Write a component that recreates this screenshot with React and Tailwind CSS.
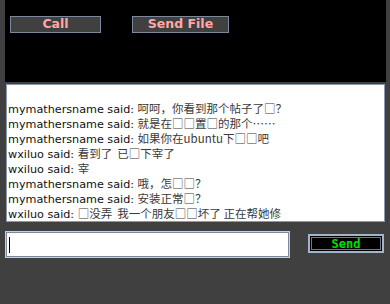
const lines = [
  ["mymathersname said: ", "呵呵，你看到那个帖子了□？"],
  ["mymathersname said: ", "就是在□□置□的那个……"],
  ["mymathersname said: ", "如果你在ubuntu下□□吧"],
  ["wxiluo said: ", "看到了  已□下宰了"],
  ["wxiluo said: ", "宰"],
  ["mymathersname said: ", "哦，怎□□？"],
  ["mymathersname said: ", "安装正常□？"],
  ["wxiluo said: ", "□没弄  我一个朋友□□坏了 正在帮她修"],
];

function TopButton({ label, width }) {
  return (
    <button
      className={`${width} h-[17px] bg-[#404040] border border-[#7a8a9c] text-[#ffa8a8] text-[12.5px] font-bold leading-none`}
      style={{ fontFamily: '"DejaVu Sans", sans-serif' }}
    >
      {label}
    </button>
  );
}

export default function App() {
  return (
    <div className="w-[390px] h-[304px] bg-[#404040] flex flex-col overflow-hidden">
      <div className="ml-[5px] mr-[4px] h-[82px] bg-black flex items-start pt-[16px] pl-[5px] gap-[31px]">
        <TopButton label="Call" width="w-[91px]" />
        <TopButton label="Send File" width="w-[97px]" />
      </div>

      <div
        className="mt-[2px] ml-[6px] w-[379px] h-[138px] bg-white border border-[#8a9aae] pt-[15px] pl-[1px] overflow-hidden"
        style={{ fontFamily: '"DejaVu Sans", "Noto Sans CJK SC", sans-serif' }}
      >
        {lines.map(([name, msg], i) => (
          <div key={i} className="h-[15px] leading-[15px] whitespace-pre text-[#111] overflow-hidden">
            <span className="text-[11.2px] leading-[15px]">{name}</span>
            <span
              className="text-[11.5px] leading-[15px] text-[#3a3a3a]"
              style={{ fontFamily: '"Noto Sans CJK SC", sans-serif' }}
            >
              {msg}
            </span>
          </div>
        ))}
      </div>

      <div className="mt-[10px] flex items-start">
        <div className="ml-[6px] w-[283px] h-[25px] bg-white border border-[#7a8a9c] outline outline-1 outline-[#c8d0d8] flex items-center pl-[2px]">
          <div className="w-[1px] h-[16px] bg-black" />
        </div>
        <button
          className="ml-[19px] mt-[2px] w-[76px] h-[19px] bg-black border-2 border-[#a4b4c8] outline outline-1 outline-[#6a7a8c] -outline-offset-4 text-[#00e000] text-[12px] font-bold leading-none"
          style={{ fontFamily: '"DejaVu Sans Mono", monospace' }}
        >
          Send
        </button>
      </div>
    </div>
  );
}
